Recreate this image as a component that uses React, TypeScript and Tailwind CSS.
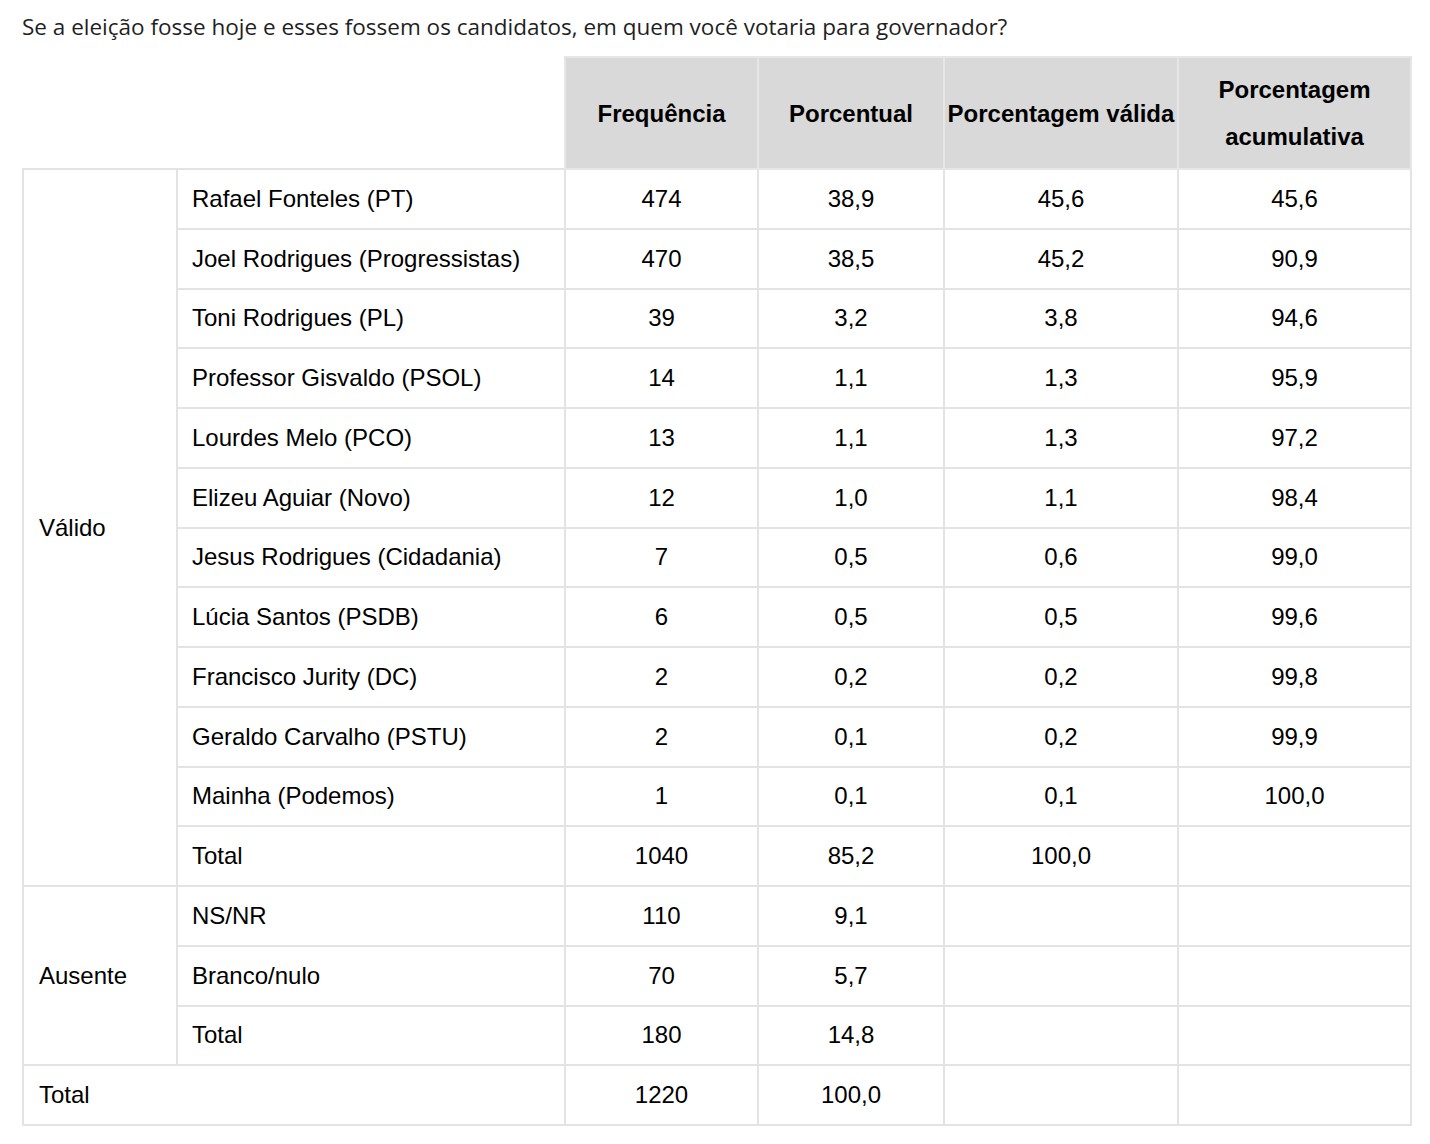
import React from "react";

type Row = { name: string; f: string; p: string; v: string; a: string };

const valid: Row[] = [
  { name: "Rafael Fonteles (PT)", f: "474", p: "38,9", v: "45,6", a: "45,6" },
  { name: "Joel Rodrigues (Progressistas)", f: "470", p: "38,5", v: "45,2", a: "90,9" },
  { name: "Toni Rodrigues (PL)", f: "39", p: "3,2", v: "3,8", a: "94,6" },
  { name: "Professor Gisvaldo (PSOL)", f: "14", p: "1,1", v: "1,3", a: "95,9" },
  { name: "Lourdes Melo (PCO)", f: "13", p: "1,1", v: "1,3", a: "97,2" },
  { name: "Elizeu Aguiar (Novo)", f: "12", p: "1,0", v: "1,1", a: "98,4" },
  { name: "Jesus Rodrigues (Cidadania)", f: "7", p: "0,5", v: "0,6", a: "99,0" },
  { name: "Lúcia Santos (PSDB)", f: "6", p: "0,5", v: "0,5", a: "99,6" },
  { name: "Francisco Jurity (DC)", f: "2", p: "0,2", v: "0,2", a: "99,8" },
  { name: "Geraldo Carvalho (PSTU)", f: "2", p: "0,1", v: "0,2", a: "99,9" },
  { name: "Mainha (Podemos)", f: "1", p: "0,1", v: "0,1", a: "100,0" },
  { name: "Total", f: "1040", p: "85,2", v: "100,0", a: "" },
];

const absent: Row[] = [
  { name: "NS/NR", f: "110", p: "9,1", v: "", a: "" },
  { name: "Branco/nulo", f: "70", p: "5,7", v: "", a: "" },
  { name: "Total", f: "180", p: "14,8", v: "", a: "" },
];

const td = "border-2 border-[#e3e3e3] h-[59.75px] p-0 align-middle";
const num = td + " text-center";
const th = "bg-[#d9d9d9] border-2 border-[#e6e6e6] font-bold text-center align-middle leading-[47px] p-0";

function Cells({ r }: { r: Row }) {
  return (
    <>
      <td className={td + " pl-[14px]"}>{r.name}</td>
      <td className={num}>{r.f}</td>
      <td className={num}>{r.p}</td>
      <td className={num}>{r.v}</td>
      <td className={num}>{r.a}</td>
    </>
  );
}

export default function App() {
  return (
    <div className="bg-white w-[1430px] h-[1144px] pl-[22px] pt-[11px]">
      <p className="text-[22.5px] leading-[32px] text-[#1f1f1f] font-['Open_Sans',sans-serif] mb-[13px] whitespace-nowrap">
        Se a eleição fosse hoje e esses fossem os candidatos, em quem você votaria para governador?
      </p>
      <table className="border-collapse table-fixed w-[1388px] text-[24px] text-black font-['Liberation_Sans',Arial,sans-serif]">
        <colgroup>
          <col className="w-[154px]" />
          <col className="w-[388px]" />
          <col className="w-[193px]" />
          <col className="w-[186px]" />
          <col className="w-[234px]" />
          <col className="w-[233px]" />
        </colgroup>
        <thead>
          <tr className="h-[112px]">
            <th colSpan={2} className="p-0 border-0 bg-white"></th>
            <th className={th}>Frequência</th>
            <th className={th}>Porcentual</th>
            <th className={th}>Porcentagem válida</th>
            <th className={th}>
              Porcentagem
              <br />
              acumulativa
            </th>
          </tr>
        </thead>
        <tbody>
          {valid.map((r, i) => (
            <tr key={"v" + i}>
              {i === 0 && (
                <td rowSpan={valid.length} className={td + " pl-[15px]"}>
                  Válido
                </td>
              )}
              <Cells r={r} />
            </tr>
          ))}
          {absent.map((r, i) => (
            <tr key={"a" + i}>
              {i === 0 && (
                <td rowSpan={absent.length} className={td + " pl-[15px]"}>
                  Ausente
                </td>
              )}
              <Cells r={r} />
            </tr>
          ))}
          <tr>
            <td colSpan={2} className={td + " pl-[15px]"}>
              Total
            </td>
            <td className={num}>1220</td>
            <td className={num}>100,0</td>
            <td className={num}></td>
            <td className={num}></td>
          </tr>
        </tbody>
      </table>
    </div>
  );
}
